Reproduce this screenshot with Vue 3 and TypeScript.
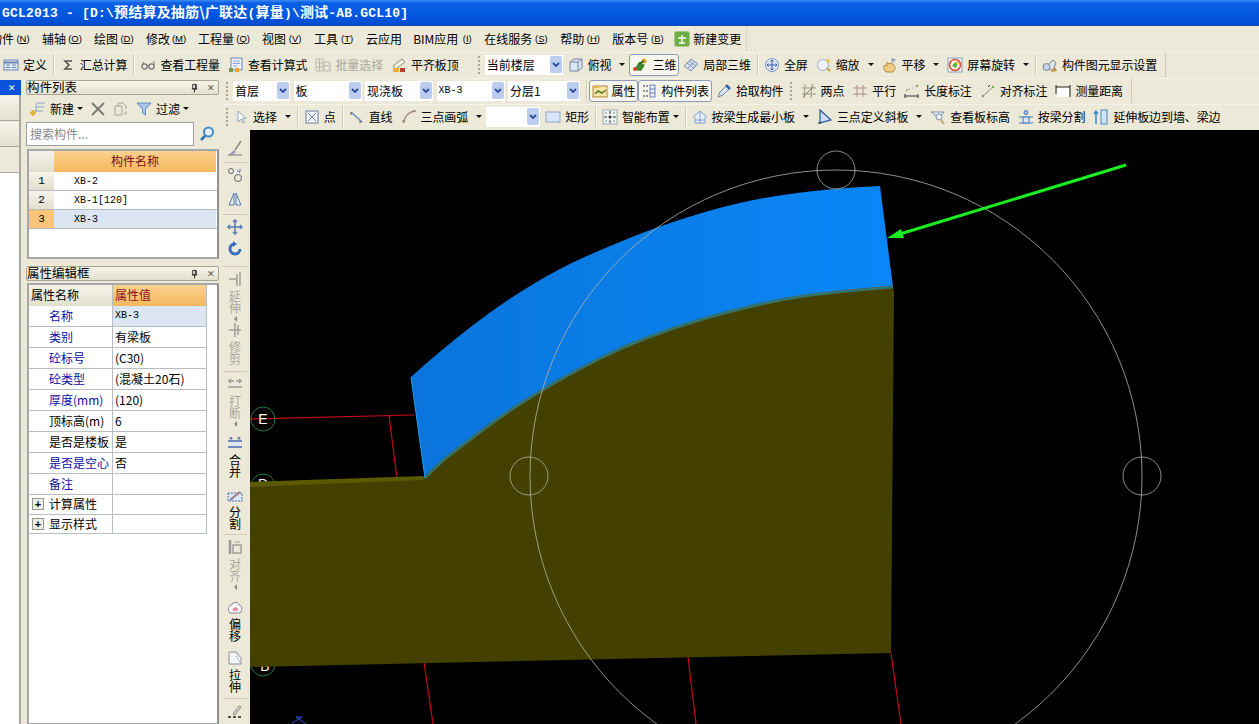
<script setup lang="ts">
// GCL2013 主窗口：菜单、工具栏、构件面板和绘图区
interface Item {
  k?: 'sep' | 'grip' | 'sel' | 'gap';
  icon?: string;
  text?: string;
  caret?: boolean;
  tight?: boolean;
  gray?: boolean;
  on?: boolean;
  mono?: boolean;
  w?: number;
}

const menus = [
  ['构件', 'N'], ['辅轴', 'O'], ['绘图', 'D'], ['修改', 'M'], ['工程量', 'Q'], ['视图', 'V'],
  ['工具', 'T'], ['云应用', ''], ['BIM应用', 'I'], ['在线服务', 'S'], ['帮助', 'H'], ['版本号', 'B'],
];

const icons: Record<string, string> = {
  define: '<rect x="1" y="3" width="14" height="10" fill="#dfe9f7" stroke="#6a86b5"/><path d="M1 5.5h14" stroke="#6a86b5" stroke-width="2"/><path d="M3 8h4M3 10.5h4M9 8h4M9 10.5h4" stroke="#6a86b5"/>',
  sigma: '<path d="M12 4H5l4 4-4 4h7" fill="none" stroke="#555" stroke-width="1.6"/>',
  glasses: '<circle cx="4.5" cy="9.5" r="2.6" fill="none" stroke="#777" stroke-width="1.3"/><circle cx="11.5" cy="9.5" r="2.6" fill="none" stroke="#777" stroke-width="1.3"/><path d="M7 9h2M2 8l2-3M14 8V4" stroke="#777"/>',
  calc: '<rect x="3" y="1" width="11" height="12" fill="#eef2fa" stroke="#6d87b4"/><path d="M5 4h7M5 6.500h7M5 9h4" stroke="#8aa3cc"/><rect x="1" y="11" width="4" height="4" fill="#7c9a4a"/><rect x="7" y="11" width="4" height="4" fill="#e6a63c"/>',
  batch: '<path d="M1 2h7v12H1zM1 6h7M1 10h7M4.500 2v12M9 5h6v9H9zM9 9h6" fill="none" stroke="#b9b9b0"/>',
  level: '<path d="M2 9l9-7 3 3-9 7z" fill="#f3f1e4" stroke="#8a8a80"/><rect x="2" y="11" width="6" height="4" fill="#e7b13a"/><rect x="9" y="11" width="5" height="4" fill="#b3412f"/>',
  box: '<path d="M2 5l4-3h8v9l-4 3H2z" fill="#dce7f5" stroke="#76869c"/><path d="M2 5h8v9M10 5l4-3" fill="none" stroke="#76869c"/>',
  three: '<path d="M2 13l5-8 6 3-4 6z" fill="#3f8a2c"/><circle cx="12" cy="4" r="2.500" fill="#e9a82c"/><circle cx="3" cy="12" r="2" fill="#d8452e"/><path d="M7 7l5-3" stroke="#1e5e1e" stroke-width="1.500"/>',
  local: '<path d="M1 9l7-7 7 5-7 7z" fill="#d6e2f3" stroke="#7f90a8"/><path d="M4 6l7 5M6 4l7 5M5 11l6-6" stroke="#7f90a8"/>',
  full: '<circle cx="8" cy="8" r="6.500" fill="#dbe7f8" stroke="#7d97c4"/><path d="M8 3v10M3 8h10" stroke="#3e5f9e"/><path d="M6.500 4.500L8 3l1.500 1.500M6.500 11.500L8 13l1.500-1.500M4.500 6.500L3 8l1.500 1.500M11.500 6.500L13 8l-1.500 1.500" fill="none" stroke="#3e5f9e"/>',
  zoom: '<circle cx="7" cy="8" r="5.500" fill="#eef3fa" stroke="#9fb2cf"/><path d="M11 11l3 3" stroke="#c79a3a" stroke-width="2"/><path d="M12 1l1 2 2 1-2 1-1 2-1-2-2-1 2-1z" fill="#e8c64a"/>',
  pan: '<path d="M4 15c-3-3-3-6-1-7l2 1V5l2 2 2-1 3 2c2 2 1 5-1 7z" fill="#eccb86" stroke="#b18b45"/><path d="M11 1v5M9 3h5" stroke="#6a86b5"/>',
  rotate: '<rect x="1" y="1" width="14" height="14" fill="#fdf6e0" stroke="#7fa2c9"/><circle cx="8" cy="8" r="5.500" fill="none" stroke="#d84a3a" stroke-width="1.500"/><path d="M5 9l3-4 3 1-2 5z" fill="#4eb04a"/><circle cx="10" cy="6" r="1.500" fill="#e9c23a"/>',
  display: '<path d="M2 12l9-9 3 3-3 7z" fill="#dfe4ea" stroke="#7d8794"/><circle cx="4.500" cy="10" r="3.500" fill="#c8d4e4" stroke="#7d8794"/><path d="M9 15l6-1-2-4z" fill="#c98b3c"/>',
  attr: '<rect x="1" y="3" width="14" height="11" fill="#f7e6a9" stroke="#b08b3c"/><path d="M3 11l3-3 4 2 4-3" fill="none" stroke="#5a7a2a" stroke-width="1.500"/><path d="M1 3h6v2H1z" fill="#e8b84a"/>',
  list: '<path d="M3 2v2M3 7v2M3 12v2M6 2v2M6 7v2M6 12v2" stroke="#333"/><rect x="9" y="2" width="5" height="12" fill="#e7eefb" stroke="#6a86b5"/><path d="M9 6h5M9 10h5" stroke="#6a86b5"/>',
  pick: '<path d="M2 14l2-5 6-6 3 3-6 6z" fill="#d9e4f2" stroke="#6f86a8"/><path d="M10 2l4 4" stroke="#2f6aa8" stroke-width="2.500"/>',
  two: '<path d="M4 1l-1 14M11 1l-1 14M1 5h14M1 11h14" stroke="#9a9a8c"/><path d="M2 14L13 3" stroke="#8a7a50"/>',
  para: '<path d="M1 5h14M1 11h14M5 2v12M11 2v12" stroke="#a98f8f"/>',
  len: '<path d="M1 11v4M14 11v4M1 13h13" stroke="#333"/><circle cx="3" cy="7" r="1" fill="#7fa55a"/><circle cx="13" cy="3" r="1.200" fill="#7fa55a"/><path d="M5 6l1 0M8 5h1" stroke="#888"/>',
  align: '<path d="M3 13L13 4" stroke="#555" stroke-dasharray="2 1"/><circle cx="3" cy="13" r="1.300" fill="#7fa55a"/><circle cx="13" cy="4" r="1.300" fill="#7fa55a"/><path d="M8 4l2-2" stroke="#333"/>',
  measure: '<rect x="2" y="4" width="12" height="10" fill="#fff"/><path d="M1 2v9M15 2v12M1 4h14" stroke="#222"/>',
  cursor: '<path d="M5 2v11l3-3 2 4 1.500-.7-2-4H13z" fill="#fff" stroke="#8fa2bd"/>',
  point: '<rect x="2" y="2" width="12" height="12" fill="#eef3fb" stroke="#6d7f9c"/><path d="M4 4l8 8M12 4l-8 8" stroke="#6d7f9c"/>',
  line: '<path d="M2 3l11 10" stroke="#6d8ec0" stroke-width="1.500"/><path d="M2 3v3M13 13h-3" stroke="#555"/>',
  arc: '<path d="M3 14C3 8 7 3 14 2" fill="none" stroke="#b08a8a" stroke-width="1.500"/><path d="M1 12h3M12 2h3" stroke="#6a7c52"/>',
  rect: '<rect x="1" y="3" width="14" height="10" fill="#d9e5f6" stroke="#8fa8cc"/>',
  smart: '<rect x="1" y="1" width="14" height="14" fill="#f0f3f6" stroke="#9aa"/><path d="M8 2v3M8 11v3M2 8h3M11 8h3" stroke="#333"/><path d="M3 3l2 2M13 3l-2 2M3 13l2-2M13 13l-2-2" stroke="#6a9a5a"/><circle cx="8" cy="8" r="1.500" fill="#333"/>',
  minplate: '<path d="M1 8l7-6 7 6M3 8v6h10V8" fill="#e5eefa" stroke="#7fa2cf"/><path d="M8 2v12M3 11h10" stroke="#7fa2cf"/>',
  slope: '<path d="M3 1v13l11-3z" fill="#cfe0f5" stroke="#2f5f9f" stroke-width="1.300"/><path d="M1 14h3" stroke="#222"/>',
  elev: '<path d="M1 3h13l-5 6v0L1 3z" fill="#e2ebf6" stroke="#7f93ad"/><circle cx="9" cy="8" r="3" fill="#eef3fb" stroke="#7f93ad"/><path d="M11 11l3 4" stroke="#c2a267" stroke-width="2"/>',
  split: '<circle cx="8" cy="3.500" r="2" fill="#9fc0ec" stroke="#4a78b8"/><path d="M1 8h14M1 14h14" stroke="#4a78b8"/><path d="M5 8h6v6H5z" fill="#d5e4f7" stroke="#4a78b8"/>',
  extend: '<path d="M3 15V3M1 5l2-3 2 3" fill="none" stroke="#2f8fd0" stroke-width="1.500"/><rect x="8" y="1" width="6" height="14" fill="#cde3f7" stroke="#4a86c5"/>',
};

const rows: { cls: string; end?: boolean; items: Item[] }[] = [
  {
    cls: 'row-a',
    end: true,
    items: [
      { icon: 'define', text: '定义' }, { k: 'sep' },
      { icon: 'sigma', text: '汇总计算' }, { k: 'sep' },
      { icon: 'glasses', text: '查看工程量' }, { icon: 'calc', text: '查看计算式' },
      { icon: 'batch', text: '批量选择', gray: true }, { icon: 'level', text: '平齐板顶' },
      { k: 'gap', w: 13 }, { k: 'grip' }, { k: 'sel', text: '当前楼层', w: 78 },
      { icon: 'box', text: '俯视', caret: true }, { icon: 'three', text: '三维', on: true },
      { icon: 'local', text: '局部三维' }, { k: 'sep' },
      { icon: 'full', text: '全屏' }, { icon: 'zoom', text: '缩放', caret: true },
      { icon: 'pan', text: '平移', caret: true }, { icon: 'rotate', text: '屏幕旋转', caret: true }, { k: 'sep' },
      { icon: 'display', text: '构件图元显示设置' },
    ],
  },
  {
    cls: 'row-b',
    end: true,
    items: [
      { k: 'grip' }, { k: 'sel', text: '首层', w: 57 }, { k: 'sel', text: '板', w: 68 },
      { k: 'sel', text: '现浇板', w: 68 }, { k: 'sel', text: 'XB-3', w: 68, mono: true },
      { k: 'sel', text: '分层1', w: 72 }, { k: 'sep' },
      { icon: 'attr', text: '属性', on: true }, { icon: 'list', text: '构件列表', on: true },
      { icon: 'pick', text: '拾取构件' }, { k: 'grip' },
      { icon: 'two', text: '两点' }, { icon: 'para', text: '平行' }, { icon: 'len', text: '长度标注' },
      { icon: 'align', text: '对齐标注' }, { icon: 'measure', text: '测量距离' },
    ],
  },
  {
    cls: 'row-c',
    items: [
      { k: 'grip' }, { icon: 'cursor', text: '选择', caret: true }, { k: 'sep' },
      { icon: 'point', text: '点' }, { k: 'sep' }, { icon: 'line', text: '直线' },
      { icon: 'arc', text: '三点画弧', caret: true }, { k: 'sel', text: '', w: 54 },
      { icon: 'rect', text: '矩形' }, { k: 'sep' }, { icon: 'smart', text: '智能布置', caret: true, tight: true }, { k: 'sep' },
      { icon: 'minplate', text: '按梁生成最小板', caret: true }, { icon: 'slope', text: '三点定义斜板', caret: true },
      { icon: 'elev', text: '查看板标高' }, { icon: 'split', text: '按梁分割' }, { icon: 'extend', text: '延伸板边到墙、梁边' },
    ],
  },
];

// h 是每个按钮占的高度，按截图逐个量出来的
const vtools = [
  { h: 22, line: true, d: '<path d="M2 15l5-5 2 2-4 3z" fill="#a98fc2"/><path d="M8 10l6-9" stroke="#8a8a80" stroke-width="1.500"/><path d="M1 15h14" stroke="#777"/>' },
  { h: 24, d: '<circle cx="4" cy="4" r="2.500" fill="none" stroke="#667"/><circle cx="11" cy="11" r="3.500" fill="none" stroke="#667"/><path d="M10 3l3 3M13 2v3" stroke="#4a78b8"/>' },
  { h: 23, line: true, d: '<path d="M7 2L2 14h5zM9 2l5 12H9z" fill="#e2eaf6" stroke="#5a7ab0"/>' },
  { h: 22, d: '<path d="M8 1v14M1 8h14" stroke="#5a7ab0" stroke-width="1.500"/><path d="M6 3l2-2 2 2M6 13l2 2 2-2M3 6L1 8l2 2M13 6l2 2-2 2" fill="none" stroke="#5a7ab0" stroke-width="1.500"/>' },
  { h: 25, line: true, d: '<path d="M13 8a5 5 0 1 1-6-5" fill="none" stroke="#3a6fc0" stroke-width="3"/><path d="M6 0l4 3-4 3z" fill="#3a6fc0"/>' },
  { h: 51, text: '延伸', gray: true, caret: true, d: '<path d="M13 1v14M10 3v12M2 8h8" stroke="#a0a098" stroke-width="1.500"/>' },
  { h: 49, text: '修剪', gray: true, line: true, d: '<path d="M8 1v14M2 8h12M11 3v10" stroke="#a0a098" stroke-width="1.500"/>' },
  { h: 59, text: '打断', gray: true, caret: true, d: '<path d="M1 5h6M9 5h6M1 11h14M4 3l-2 2 2 2M12 3l2 2-2 2" fill="none" stroke="#a0a098" stroke-width="1.500"/>' },
  { h: 52, text: '合并', d: '<path d="M1 6h14M1 12h14" stroke="#4a6fae" stroke-width="1.300"/><path d="M4 2v4M2.500 4L4 2l1.500 2M12 2v4M10.500 4L12 2l1.500 2" fill="none" stroke="#4a6fae"/><path d="M3 7h10v4H3z" fill="#dbe6f6"/>' },
  { h: 47, text: '分割', line: true, d: '<path d="M1 6h14v8H1z" fill="#dbe6f6" stroke="#4a6fae" stroke-dasharray="2 1"/><path d="M3 13l10-8" stroke="#9a7a7a" stroke-width="2"/>' },
  { h: 60, text: '对齐', gray: true, caret: true, d: '<path d="M3 1v14M3 3h0" stroke="#999" stroke-width="2.500"/><path d="M6 6h8v8H6z" fill="none" stroke="#a0a098" stroke-width="1.500"/><path d="M8 3h5" stroke="#a0a098"/>' },
  { h: 51, text: '偏移', d: '<path d="M3 14C0 10 2 6 5 6c0-3 6-4 7 0 3 0 4 5 1 8z" fill="#f7f7f7" stroke="#8a8a98"/><path d="M6 12c-1-2 0-3 1-3 0-1 3-1 3 0 1 0 2 2 0 3z" fill="#e58ea4"/>' },
  { h: 48, text: '拉伸', line: true, d: '<path d="M2 2h7l5 6v6H2z" fill="#f2f3f2" stroke="#8a8f98"/><path d="M9 6l4 6" stroke="#8a8f98" stroke-dasharray="1 1"/>' },
  { h: 20, d: '<path d="M1 14h14" stroke="#222" stroke-dasharray="3 2" stroke-width="1.500"/><path d="M6 11l6-8 2 1-6 8z" fill="#d8d8cf" stroke="#888"/>' },
];

const elements = ['XB-2', 'XB-1[120]', 'XB-3'];

const props = [
  { n: '名称', v: 'XB-3', blue: true, sel: true, mono: true },
  { n: '类别', v: '有梁板', blue: true },
  { n: '砼标号', v: '(C30)', blue: true },
  { n: '砼类型', v: '(混凝土20石)', blue: true },
  { n: '厚度(mm)', v: '(120)', blue: true },
  { n: '顶标高(m)', v: '6' },
  { n: '是否是楼板', v: '是' },
  { n: '是否是空心', v: '否', blue: true },
  { n: '备注', v: '', blue: true },
  { n: '计算属性', v: '', tree: true },
  { n: '显示样式', v: '', tree: true },
];

type Pt = [number, number];

const topPts: Pt[] = [[411, 377], [425, 364], [470, 327], [510, 298], [560, 268], [607, 247], [657, 227], [717, 208], [767, 197], [827, 189], [880, 186]];
const lowPts: Pt[] = [[893, 287], [833, 292], [783, 299], [727, 312], [673, 328], [623, 347], [577, 370], [537, 393], [500, 417], [467, 442], [443, 460], [425, 478]];

// 用中点做二次曲线，弧线不会有折角
const smooth = (p: Pt[]) => {
  let d = `L${p[0][0]} ${p[0][1]}`;
  for (let i = 1; i < p.length - 1; i++) {
    const mx = (p[i][0] + p[i + 1][0]) / 2;
    const my = (p[i][1] + p[i + 1][1]) / 2;
    d += `Q${p[i][0]} ${p[i][1]} ${mx} ${my}`;
  }
  const last = p[p.length - 1];
  return `${d}L${last[0]} ${last[1]}`;
};

const lowLine = `M${smooth(lowPts).slice(1)}`;
const bluePath = `M${smooth(topPts).slice(1)}${smooth(lowPts)}Z`;
const olivePath = `M250 484L423 478${smooth([...lowPts].reverse())}L894 292L891 653L250 667Z`;
</script>

<template>
  <div class="app">
    <div class="title">
      <span class="lat">GCL2013 - [D:\</span>预结算及抽筋\广联达<span class="lat">(</span>算量<span class="lat">)\</span>测试<span class="lat">-AB.GCL10]</span>
    </div>

    <div class="menu">
      <div class="menu-in">
        <span v-for="m in menus" :key="m[0]" class="mi" :class="{ bim: m[0].startsWith('BIM') }">{{ m[0] }}<span v-if="m[1]" class="hk">(<u>{{ m[1] }}</u>)</span></span>
        <span class="mi chg">
          <svg class="ic" viewBox="0 0 16 16"><rect x="0.500" y="0.500" width="15" height="15" rx="2" fill="#6fae46" stroke="#9ccb7c" /><path d="M4 7h8M8 4v9M5 12h6" stroke="#fff" stroke-width="1.300" /></svg>
          新建变更
        </span>
      </div>
    </div>

    <div v-for="r in rows" :key="r.cls" class="bar" :class="r.cls">
      <div class="bar-in" :class="{ end: r.end }">
        <template v-for="(it, i) in r.items" :key="i">
          <i v-if="it.k === 'sep'" class="sep"></i>
          <i v-else-if="it.k === 'grip'" class="grip"></i>
          <i v-else-if="it.k === 'gap'" :style="{ width: it.w + 'px' }"></i>
          <div v-else-if="it.k === 'sel'" class="sel" :class="{ mono: it.mono }" :style="{ width: it.w + 'px' }">
            <span>{{ it.text }}</span>
            <b class="drop"><svg viewBox="0 0 8 6"><path d="M1 1l3 3 3-3" fill="none" stroke="#2c4f9e" stroke-width="1.800" /></svg></b>
          </div>
          <div v-else class="tool" :class="{ gray: it.gray, on: it.on }">
            <svg class="ic" viewBox="0 0 16 16" v-html="icons[it.icon!]"></svg>
            <span>{{ it.text }}</span>
            <i v-if="it.caret" class="caret" :class="{ tight: it.tight }"></i>
          </div>
        </template>
      </div>
    </div>

    <aside class="dock">
      <div class="strip">
        <div class="strip-in">
          <div class="strip-head">✕</div>
          <div class="strip-btn"></div>
          <div class="strip-btn"></div>
          <div class="strip-white"></div>
        </div>
      </div>

      <div class="panels">
        <div class="ph">
          <span>构件列表</span>
          <svg viewBox="0 0 10 10" class="pin"><path d="M3 1h4v5H3zM2 6h6M5 6v4M6 1v5" fill="none" stroke="#222" /></svg>
          <span class="x">✕</span>
        </div>
        <div class="ptools">
          <svg class="ic" viewBox="0 0 16 16"><path d="M7 2h8M6 6h8M5 10h8" stroke="#8da4c6" /><path d="M6 2v9" stroke="#8da4c6" /><path d="M3 9v6M0 12h6" stroke="#e0b33c" stroke-width="2.500" /></svg>
          <span class="pt">新建</span><i class="caret"></i>
          <svg class="ic del" viewBox="0 0 16 16"><path d="M2 2l12 12M14 2L2 14" stroke="#777" stroke-width="1.800" /></svg>
          <svg class="ic" viewBox="0 0 16 16"><path d="M2 5h7v9H2zM5 5V2h5l3 3v3M13 10v3h-2" fill="none" stroke="#a5a5a0" /></svg>
          <svg class="ic" viewBox="0 0 16 16"><path d="M1 2h14L9.500 8v6L6.500 12V8z" fill="#a9c7ea" stroke="#5e8cc0" /></svg>
          <span class="pt">过滤</span><i class="caret"></i>
        </div>
        <div class="psearch">
          <div class="input">搜索构件...</div>
          <svg class="find" viewBox="0 0 16 16"><circle cx="9.500" cy="6" r="4.500" fill="#e5f0fb" stroke="#3f8cc9" stroke-width="2" /><path d="M6 10l-4 4" stroke="#2b6fb0" stroke-width="2.500" /></svg>
        </div>
        <div class="grid list">
          <div class="gr head"><div class="c0"></div><div class="c1 org name">构件名称</div></div>
          <div v-for="(e, i) in elements" :key="e" class="gr" :class="{ sel2: i === 2 }">
            <div class="c0">{{ i + 1 }}</div>
            <div class="c1 code">{{ e }}</div>
          </div>
        </div>

        <div class="ph second">
          <span>属性编辑框</span>
          <svg viewBox="0 0 10 10" class="pin"><path d="M3 1h4v5H3zM2 6h6M5 6v4M6 1v5" fill="none" stroke="#222" /></svg>
          <span class="x">✕</span>
        </div>
        <div class="grid attrs">
          <div class="ar head">
            <div class="an hn">属性名称</div>
            <div class="av org hv">属性值</div>
          </div>
          <div v-for="p in props" :key="p.n" class="ar" :class="{ short: p.tree }">
            <div class="an" :class="{ blue: p.blue, tree: p.tree }">
              <i v-if="p.tree" class="plus">+</i>{{ p.n }}
            </div>
            <div class="av" :class="{ cur: p.sel, code: p.mono }">{{ p.v }}</div>
          </div>
        </div>
      </div>
    </aside>

    <div class="vbar">
      <template v-for="(t, i) in vtools" :key="i">
        <div class="vt" :class="{ gray: t.gray }" :style="{ height: t.h + 'px' }">
          <svg class="ic" viewBox="0 0 16 16" v-html="t.d"></svg>
          <span v-if="t.text" class="vtxt">{{ t.text }}</span>
          <i v-if="t.caret" class="lcaret"></i>
        </div>
        <i v-if="t.line" class="vsep"></i>
      </template>
    </div>

    <svg class="canvas" viewBox="250 130 1009 594">
      <rect x="250" y="130" width="1009" height="594" fill="#000" />
      <g fill="none" stroke="#c40d14" stroke-width="1.200">
        <path d="M250 419L414 415" />
        <path d="M389 416L397 478" />
        <path d="M424 662L433 724" />
        <path d="M688 657L696 724" />
        <path d="M891 653L901 724" />
      </g>
      <g fill="none" stroke="#1c7a3c">
        <circle cx="263" cy="419" r="12" />
        <circle cx="263" cy="486" r="12" />
        <circle cx="263" cy="664" r="12" />
      </g>
      <text x="263" y="424" class="axis">E</text>
      <text x="263" y="489" class="axis">D</text>
      <text x="265" y="671" class="axis">B</text>
      <path :d="olivePath" fill="#434000" />
      <polygon points="250,482 423,476 425,478 423,480 250,487" fill="#5c5a00" />
      <path :d="bluePath" fill="url(#blue)" />
      <path :d="lowLine" fill="none" stroke="#3f6a4a" stroke-width="3" />
      <path :d="lowLine" fill="none" stroke="#2a7a90" stroke-width="1" />
      <path d="M411 377L425 478" stroke="#2a9cf0" fill="none" />
      <g fill="none" stroke="#b4b4a8" stroke-width="0.800">
        <circle cx="836" cy="476" r="306" />
        <circle cx="836" cy="170" r="19" />
        <circle cx="529" cy="476" r="19" />
        <circle cx="1142" cy="476" r="19" />
      </g>
      <path d="M1126 165L900 234" stroke="#19ee20" stroke-width="3" fill="none" />
      <polygon points="887,238 901,229 904,238" fill="#19ee20" />
      <path d="M292 723L302 717H296L306 724" stroke="#3050d0" fill="none" />
      <defs>
        <linearGradient id="blue" x1="0" x2="1" y1="0" y2="0">
          <stop offset="0" stop-color="#0a74dc" />
          <stop offset="0.500" stop-color="#0a7ee8" />
          <stop offset="1" stop-color="#0a86f8" />
        </linearGradient>
      </defs>
    </svg>
  </div>
</template>

<style scoped>
.app {
  display: grid;
  grid-template-columns: 220px 30px 1fr;
  grid-template-rows: 26px 26px 26px 26px 26px 1fr;
  width: 1259px;
  height: 724px;
  overflow: hidden;
  background: #ece9d8;
  color: #000;
  font: 12px/1 "Noto Sans CJK SC", sans-serif;
}

.title {
  grid-column: 1 / 4;
  padding: 4px 0 0 2px;
  background: linear-gradient(#3a8cf2 0, #0a5fe6 3px, #0258e0 50%, #0250d6 85%, #0146bc 100%);
  color: #fff;
  font-weight: 700;
  font-size: 14px;
  line-height: 14px;
  letter-spacing: 0.2px;
  white-space: nowrap;
}

.lat {
  font: 700 13px/14px "Liberation Mono", monospace;
}

.menu {
  grid-column: 1 / 4;
  background: #ece9d8;
}

.menu-in {
  display: flex;
  align-items: center;
  gap: 11px;
  width: 756px;
  height: 25px;
  margin-left: -10px;
  border-right: 1px solid #d8d4c2;
}

.mi {
  display: flex;
  align-items: center;
  white-space: nowrap;
}

.bim {
  margin-right: -2px;
}

.hk {
  width: 16px;
  margin-left: 1px;
  font: 9.500px "Liberation Sans", sans-serif;
  text-align: center;
}

.chg {
  gap: 3px;
  margin-left: -2px;
}

.bar {
  display: flex;
  background: #ece9d8;
  min-width: 0;
  border-top: 1px solid #f6f4ea;
  box-sizing: border-box;
}

.row-a {
  grid-column: 1 / 4;
  grid-row: 3;
}

.row-b {
  grid-column: 1 / 4;
  grid-row: 4;
  margin-left: 224px;
}

.row-c {
  grid-column: 1 / 4;
  grid-row: 5;
  margin-left: 224px;
}

.bar-in {
  display: flex;
  align-items: center;
  height: 25px;
  margin-top: -1px;
  white-space: nowrap;
}

.row-a .bar-in {
  margin-left: -1px;
}

.bar-in.end {
  padding-right: 4px;
  border-right: 1px solid #cfcbb8;
}

.tool {
  display: flex;
  align-items: center;
  gap: 4px;
  height: 22px;
  padding: 0 4px;
  box-sizing: border-box;
  letter-spacing: -0.100px;
}

.tool.gray {
  color: #a8a8a0;
}

.tool.on {
  background: #f6f5ee;
  border: 1px solid #8e9db5;
  border-radius: 3px;
  padding: 0 2px;
}

.ic {
  flex: none;
  width: 16px;
  height: 16px;
}

.caret {
  width: 0;
  height: 0;
  margin: 0 0 0 4px;
  border: 3px solid transparent;
  border-top: 3.500px solid #111;
  border-bottom: 0;
}

.caret.tight {
  margin-left: -1px;
}

.sep {
  flex: none;
  width: 1px;
  height: 21px;
  margin: 0 2px;
  background: #cfcbb8;
  box-shadow: 1px 0 #f8f7ee;
}

.grip {
  flex: none;
  width: 2px;
  height: 18px;
  margin: 0 5px 0 2px;
  background: repeating-linear-gradient(#a8a594 0 2px, transparent 2px 4px);
}

.row-c .grip {
  margin-right: 1px;
}

.sel {
  flex: none;
  display: flex;
  align-items: center;
  justify-content: space-between;
  height: 20px;
  margin-right: 3.500px;
  padding: 0 1px 0 2px;
  box-sizing: border-box;
  background: #fff;
}

.row-a .sel,
.row-c .sel {
  margin-right: 1px;
}

.sel.mono span {
  font: 10px "Liberation Mono", monospace;
}

.drop {
  display: flex;
  align-items: center;
  justify-content: center;
  width: 12px;
  height: 17px;
  background: #bccdf0;
  border-radius: 2px;
}

.drop svg {
  width: 8px;
  height: 6px;
}

.dock {
  grid-column: 1;
  grid-row: 4 / 7;
  display: flex;
  min-height: 0;
}

.strip {
  width: 26px;
  padding-top: 2px;
}

.strip-in {
  display: flex;
  flex-direction: column;
  width: 21px;
  height: 100%;
  box-sizing: border-box;
  border-right: 2px solid #a9a9a4;
}

.strip-head {
  height: 15px;
  margin-right: -2px;
  padding-right: 5px;
  background: #0a52dc;
  color: #fff;
  font-size: 9px;
  line-height: 15px;
  text-align: right;
}

.strip-btn {
  height: 24px;
  margin-top: 1px;
  background: linear-gradient(#f5f3e9, #e4e1cf);
  border-bottom: 1px solid #a9a9a4;
}

.strip-white {
  flex: 1;
  margin-top: 25px;
  background: #fff;
  border-top: 1px solid #a9a9a4;
}

.panels {
  width: 193px;
  padding-top: 2px;
}

.ph {
  display: flex;
  align-items: center;
  height: 15px;
  padding-right: 3px;
  background: linear-gradient(#f7f5ea, #e3e0cd);
  border: 1px solid #a8a596;
  border-radius: 2px;
  box-sizing: border-box;
  font-size: 12.500px;
}

.ph span:first-child {
  flex: 1;
}

.second {
  margin-top: 7px;
}

.pin {
  width: 9px;
  height: 10px;
  margin-right: 8px;
}

.x {
  font-size: 9px;
  color: #555;
}

.ptools {
  display: flex;
  align-items: center;
  height: 27px;
  padding-left: 4px;
}

.pt {
  margin-left: 4px;
}

.ptools .caret {
  margin-left: 3px;
}

.ptools .del {
  margin-left: 7px;
}

.ptools .ic + .ic {
  margin-left: 7px;
}

.psearch {
  display: flex;
  align-items: center;
  height: 24px;
}

.input {
  width: 168px;
  height: 24px;
  padding: 5px 0 0 3px;
  box-sizing: border-box;
  background: #fff;
  border: 1px solid #9aa0a8;
  color: #888;
}

.find {
  width: 16px;
  height: 16px;
  margin-left: 5px;
}

.grid {
  margin: 3px 0 0 1px;
  background: #fff;
  border: 2px solid #a4a8a8;
  border-right-color: #8e9292;
  box-sizing: border-box;
}

.list {
  height: 110px;
}

.gr {
  display: flex;
  height: 19px;
  border-bottom: 1px solid #b8bcc4;
  box-sizing: border-box;
}

.gr.head {
  height: 21px;
  border-bottom: 0;
}

.c0 {
  width: 25px;
  padding-top: 3px;
  box-sizing: border-box;
  text-align: center;
  font: 11px "Liberation Mono", monospace;
  background: linear-gradient(#f6f4ea, #e2dfcd);
}

.c1 {
  width: 162px;
  padding: 4px 0 0 20px;
  box-sizing: border-box;
}

.org {
  background: linear-gradient(#fbd28e, #f4b85e);
}

.name {
  padding: 4px 0 0;
  text-align: center;
  color: #7a1020;
}

.code {
  font: 10px "Liberation Mono", monospace;
}

.sel2 .c0 {
  background: #fcc479;
}

.sel2 .c1 {
  background: #dce6f2;
}

.attrs {
  height: 442px;
  margin-top: 2px;
}

.ar {
  display: flex;
  width: 177px;
  height: 20px;
  border-bottom: 1px solid #b8bcc4;
  border-right: 1px solid #b8bcc4;
}

.ar.short {
  height: 18.500px;
}

.ar.head {
  border-bottom: 0;
  height: 21px;
}

.an {
  flex: none;
  width: 84px;
  padding: 4px 0 0 20px;
  box-sizing: border-box;
  border-right: 1px solid #b8bcc4;
  white-space: nowrap;
}

.an.hn {
  padding-left: 2px;
  background: linear-gradient(#f6f4ea, #e2dfcd);
}

.an.blue {
  color: #0a10a8;
}

.an.tree {
  display: flex;
  padding: 3px 0 0 3px;
}

.plus {
  width: 10px;
  height: 10px;
  margin-right: 5px;
  border: 1px solid #9a9a90;
  background: #f0eee2;
  font: 700 11px/10px "Liberation Sans", sans-serif;
  text-align: center;
}

.av {
  flex: 1;
  padding: 4px 0 0 2px;
}

.av.cur {
  background: #dce6f2;
}

.hv {
  color: #8a1020;
}

.vbar {
  grid-column: 2;
  grid-row: 6;
  display: flex;
  flex-direction: column;
  align-items: center;
  padding-top: 10px;
  background: #ece9d8;
  overflow: hidden;
}

.vt {
  display: flex;
  flex-direction: column;
  align-items: center;
  flex: none;
}

.vt.gray {
  color: #a8a8a0;
}

.vtxt {
  width: 12px;
  margin-top: 3px;
  line-height: 11.500px;
  word-break: break-all;
}

.lcaret {
  width: 0;
  height: 0;
  margin-top: 3px;
  border: 3px solid transparent;
  border-right: 3.500px solid #8a8a80;
  border-left: 0;
}

.vsep {
  flex: none;
  width: 24px;
  height: 1px;
  margin: 0 0 4px;
  background: #cfcbb8;
}

.canvas {
  grid-column: 3;
  grid-row: 6;
  display: block;
  width: 1009px;
  height: 594px;
}

.axis {
  fill: #fff;
  font: 14px "Liberation Sans", sans-serif;
  text-anchor: middle;
}
</style>
